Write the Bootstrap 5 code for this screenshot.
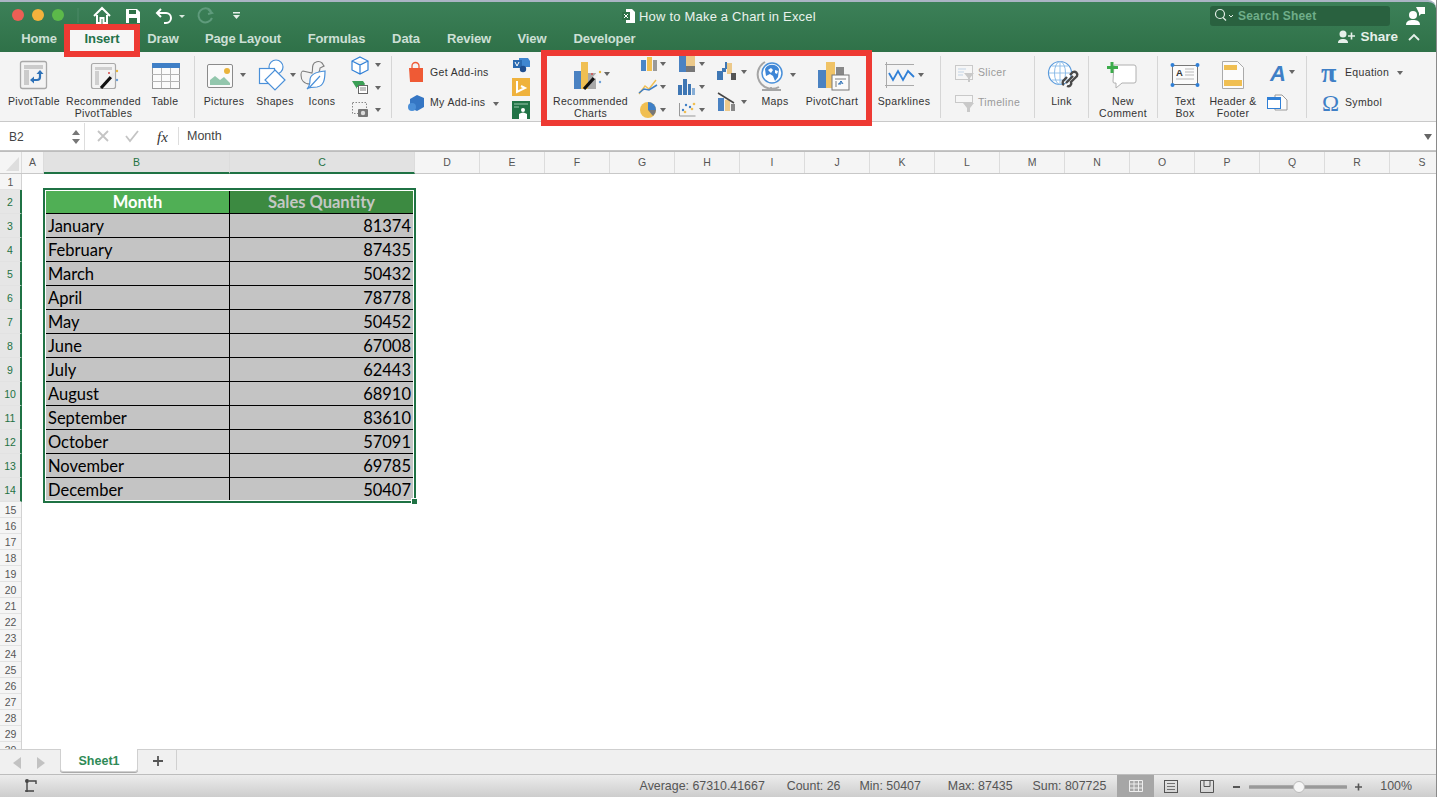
<!DOCTYPE html>
<html lang="en">
<head>
<meta charset="utf-8">
<title>How to Make a Chart in Excel</title>
<link rel="stylesheet" href="https://cdn.jsdelivr.net/npm/bootstrap@5.3.0/dist/css/bootstrap.min.css">
<style>
html,body{margin:0;height:797px;overflow:hidden;background:#fff}
body{font-family:"Liberation Sans",Arial,sans-serif;color:#333}
svg{display:block;flex:none}
.xl-win{height:797px;position:relative;overflow:hidden;border-right:1px solid #8a8a8a}
.xl-head{height:52px;background:linear-gradient(#3c8058,#2f7148);color:#fff;border-top:2px solid #aab4c4;border-top-right-radius:8px}
.xl-toprow{height:28px;padding-left:0}
.xl-title{width:177px;font-size:13px;color:#e9f2ec;letter-spacing:.2px;white-space:nowrap;padding:1px 0 0 1px}
.xl-search{width:180px;height:20px;background:#29613f;border-radius:3px;font-size:12px;color:#6fae8a;font-weight:700;letter-spacing:.2px}
.xl-tabs .nav-link{color:#dbe9e0;font-size:13px;font-weight:700;padding:0;height:22px;line-height:17px;text-align:center;letter-spacing:-.1px;opacity:.92}
.xl-tabs .nav-link.active{color:#23724a;background:#f6f6f6;opacity:1}
.tw62{width:62px;margin-left:8px}.tw64{width:64px}.tw58{width:58px}.tw102{width:102px}.tw85{width:85px}.tw54{width:54px}.tw72{width:72px}.tw91{width:91px}
.xl-share{font-size:13.5px;line-height:14px;font-weight:700;color:#e6f0ea;padding-bottom:8px}
.xl-mchev{margin-left:6px;margin-right:16px}
.xl-ribbon{height:70px;background:#f4f4f4;border-bottom:1px solid #c9c9c9;padding:2px 0 0 5px}
.xl-item{display:flex;flex-direction:column;align-items:center;flex:none}
.xl-w42{width:42px}
.xl-lab{font-size:10.5px;line-height:12px;color:#333;text-align:center;white-space:nowrap;letter-spacing:.35px}
.xl-sep{width:1px;height:62px;background:#d6d6d6;margin-top:2px;flex:none}
.xl-gap6{width:6px;flex:none}
.xl-g113{width:113px;flex:none}.xl-g93{width:93px;flex:none}.xl-g130{width:130px;flex:none}
.xl-row{height:30px;display:flex;align-items:center;font-size:10.5px;color:#333;white-space:nowrap;letter-spacing:.35px}
.xl-off{color:#9a9a9a}
.xl-fbar{height:28px;background:#fff;font-size:12.5px;color:#444;padding-top:1px}
.xl-month{margin-left:7px}
.xl-name{width:85px;padding-left:9px;border-right:1px solid #ddd;height:27px;font-size:12px}
.xl-fgap{background:#f2f2f2;border-top:1px solid #c6c6c6;border-bottom:1px solid #bdbdbd;box-sizing:content-box;height:0}
.xl-cols{height:22px;background:#f5f5f5;border-bottom:1px solid #c8c8c8;font-size:10.5px;color:#555}
.xl-cols>div{flex:none;text-align:center;line-height:21px;border-right:1px solid #dcdcdc;height:21px}
.cw22{width:22px}.cw186{width:186px}.cw185{width:185px}.cw65{width:65px}
.xl-cols>.xl-hot{background:#e2e2e2;color:#1f7244;height:22px;border-bottom:2px solid #1f7244;line-height:20px}
.xl-sheet{height:575px;overflow:hidden}
.xl-rows{width:22px;flex:none;background:#f5f5f5;border-right:1px solid #d2d2d2;font-size:10.5px;color:#555;text-align:center}
.xl-rows>div{height:16px;line-height:16px;border-bottom:1px solid #e2e2e2}
.xl-rows>.xl-rh{height:24px;line-height:24px;color:#1f7244;background:#e6e6e6;border-right:2px solid #1f7244;margin-right:-1px}
.xl-cells{position:relative;flex:1;background:#fff}
.xl-sel{position:relative;margin:14px 0 0 21px;width:373px;height:315px;border:2px solid #1f7244;padding:1px;background:#fff}
.xl-grip{position:absolute;right:-4px;bottom:-4px;width:7px;height:7px;background:#1f7244;border:1px solid #fff}
.xl-data{border-collapse:separate;border-spacing:0;width:367px;table-layout:fixed;font-family:Lato,"Open Sans",sans-serif;font-size:16.5px;color:#000}
.xl-data td,.xl-data th{height:24px;padding:0 2px;line-height:22px;background:#c4c4c4;border-bottom:1px solid #000;white-space:nowrap}
.xl-data td:first-child,.xl-data th:first-child{width:184px;border-right:1px solid #000}
.xl-data td:last-child{text-align:right}
.xl-data tr:last-child td{border-bottom:0;height:22px;line-height:20px;padding-top:2px}
.xl-data th{height:23px;text-align:center;font-weight:700;color:#fff;background:#50af55}
.xl-data th:last-child{background:#3c8a41;color:#c4c8c4}
.xl-tabsbar{height:25px;background:#f0f0f0;border-top:1px solid #cfcfcf}
.xl-sheet1{width:78px;height:23px;background:#fff;color:#2f8a57;font-size:12.5px;font-weight:700;text-align:center;line-height:24px;border:1px solid #d0d0d0;border-top:0;border-radius:0 0 3px 3px;box-shadow:0 1px 0 #aaa;margin-top:-1px}
.xl-status{height:23px;background:linear-gradient(#ececec,#cdcdcd);border-top:1px solid #bdbdbd;font-size:12.4px;color:#555;white-space:nowrap}
.xl-stat-l{margin-left:auto}
.xl-m22{margin-left:22px}.xl-m19{margin-left:19px}.xl-m27{margin-left:27px}.xl-m20{margin-left:20px}
.xl-normal{width:37px;height:23px;background:#a6a6a6;margin-left:11px}
.xl-red{position:absolute;border:6px solid #ee3a33;pointer-events:none}
.xl-red1{left:64px;top:24px;width:76px;height:33px}
.xl-red2{left:541px;top:50px;width:331px;height:76px}
</style>
</head>
<body>
<div class="xl-win d-flex flex-column">
  <header class="xl-head">
    <div class="xl-toprow d-flex align-items-center">
      <svg width="622" height="28" viewBox="0 2 622 28">
        <circle cx="18" cy="15" r="6" fill="#ec5f55"/><circle cx="38" cy="15" r="6" fill="#f4b23c"/><circle cx="58" cy="15" r="6" fill="#5cb94a"/>
        <path d="M78 8v15" stroke="#4d8a68"/>
        <path d="M94 16l8-8 8 8M97 15v8h3.500v-5h3v5h3.500v-8" fill="none" stroke="#fff" stroke-width="2"/>
        <path d="M126 9h11l3 3v11h-14z" fill="#fff"/><path d="M129 10h7v4h-7zM129 18h8v5h-8z" fill="#2f7148"/>
        <path d="M161 9l-4 4 4 4M158 13h8a5 5 0 0 1 0 10h-2" fill="none" stroke="#fff" stroke-width="2"/>
        <path d="M179 15h6l-3 3z" fill="#dbe9e0"/>
        <path d="M208 9l4 4-4 1M211 11a7 7 0 1 0 1 7" fill="none" stroke="#5f9b7c" stroke-width="2"/>
        <path d="M233 12h7v1.500h-7zM233 15h7l-3.500 4z" fill="#e6f0ea"/>
      </svg>
      <svg width="16" height="28" viewBox="622 2 16 28">
        <path d="M626 9h6l3 3v11h-9z" fill="#fff"/><path d="M622 12h8v8h-8z" fill="#2f7148"/><path d="M624 14l4 4M628 14l-4 4" stroke="#fff"/>
      </svg>
      <div class="xl-title">How to Make a Chart in Excel</div>
      <svg width="395" height="28" viewBox="815 2 395 28"></svg>
      <div class="xl-search d-flex align-items-center">
        <svg width="28" height="20" viewBox="1210 6 28 20"><circle cx="1220" cy="14" r="4.500" fill="none" stroke="#e4efe8" stroke-width="1.200"/><path d="M1223 17.500l3 3" stroke="#e4efe8" stroke-width="1.200"/><path d="M1229 15l2 2 2-2" fill="none" stroke="#e4efe8"/></svg>
        <span>Search Sheet</span>
      </div>
      <svg class="ms-3" width="20" height="28" viewBox="1405 2 20 28">
        <path d="M1415 7h9v7h-4l-2 2v-3z" fill="#fff"/><circle cx="1412" cy="15" r="4" fill="#fff"/><path d="M1405 25c0-4 3-5 7-5s7 1 7 5z" fill="#fff"/>
      </svg>
    </div>
    <div class="d-flex align-items-end">
      <ul class="nav xl-tabs">
        <li class="nav-item"><a class="nav-link tw62" href="#">Home</a></li>
        <li class="nav-item"><a class="nav-link active tw64" href="#">Insert</a></li>
        <li class="nav-item"><a class="nav-link tw58" href="#">Draw</a></li>
        <li class="nav-item"><a class="nav-link tw102" href="#">Page Layout</a></li>
        <li class="nav-item"><a class="nav-link tw85" href="#">Formulas</a></li>
        <li class="nav-item"><a class="nav-link tw54" href="#">Data</a></li>
        <li class="nav-item"><a class="nav-link tw72" href="#">Review</a></li>
        <li class="nav-item"><a class="nav-link tw54" href="#">View</a></li>
        <li class="nav-item"><a class="nav-link tw91" href="#">Developer</a></li>
      </ul>
      <div class="xl-share ms-auto d-flex align-items-center gap-1">
        <svg width="18" height="14" viewBox="1341 31 18 14"><circle cx="1346" cy="35" r="3.500" fill="#e6f0ea"/><path d="M1341 44c0-3 2-4 5-4s5 1 5 4z" fill="#e6f0ea"/><path d="M1351 37h7M1354.500 33.500v7" stroke="#e6f0ea" stroke-width="1.600"/></svg>
        <span>Share</span>
        <svg class="xl-mchev" width="12" height="14" viewBox="1408 31 12 14"><path d="M1409 41l5-5 5 5" fill="none" stroke="#e6f0ea" stroke-width="1.800"/></svg>
      </div>
    </div>
  </header>

  <section class="xl-ribbon d-flex">
    <div class="xl-item"><svg width="58" height="41" viewBox="5 54 58 41">
      <rect x="20.500" y="61.500" width="26" height="27" rx="2" fill="#f3f3f3" stroke="#a9a9a9" stroke-width="1.300"/><path d="M24 65h19v4H24zM24 70h5v15h-5z" fill="#cbcbcb"/>
      <path d="M40 73v4a3 3 0 0 1-3 3h-4" fill="none" stroke="#2f72b8" stroke-width="2.200"/><path d="M36.500 74l3.500-4 3.500 4zM34 76.500L30 80l4 3.500z" fill="#2f72b8"/></svg><div class="xl-lab">PivotTable</div></div>
    <div class="xl-item"><svg width="81" height="41" viewBox="63 54 81 41">
      <rect x="91.500" y="63.500" width="24" height="25" rx="2" fill="#f3f3f3" stroke="#a9a9a9" stroke-width="1.200"/><path d="M95 67h17v3H95zM95 71h4v14h-4z" fill="#cfcfcf"/>
      <path d="M101 88l10-11" stroke="#111" stroke-width="3.200"/><path d="M111 77l3-3.500" stroke="#e8e8e8" stroke-width="3"/><circle cx="109" cy="73" r="1" fill="#d64b4b"/><circle cx="117" cy="71" r="1.200" fill="#e8b73e"/><circle cx="117" cy="80" r="1.200" fill="#6d9fd6"/></svg><div class="xl-lab">Recommended<br>PivotTables</div></div>
    <div class="xl-item"><svg width="42" height="41" viewBox="144 54 42 41">
      <rect x="152.500" y="63.500" width="27" height="25" fill="#fbfbfb" stroke="#9b9b9b"/><rect x="152" y="63" width="28" height="5" fill="#3f7fc6"/><path d="M152 74.500h28M152 81.500h28M161.500 68v20M170.500 68v20" stroke="#b5b5b5"/></svg><div class="xl-lab">Table</div></div>
    <div class="xl-sep ms-2"></div>
    <div class="xl-item"><svg width="58" height="41" viewBox="195 54 58 41">
      <rect x="207.500" y="64.500" width="25" height="23" rx="1.500" fill="#fafafa" stroke="#8b8b8b"/><circle cx="227" cy="71" r="3" fill="#eab43c"/><path d="M210 85v-5l5-4 5 4 4-3 6 6v2z" fill="#93c7ad"/><path d="M240 73h6l-3 4z" fill="#666"/></svg><div class="xl-lab">Pictures</div></div>
    <div class="xl-item"><svg width="44" height="41" viewBox="253 54 44 41">
      <g fill="#fff" stroke="#4a90d9" stroke-width="1.200"><circle cx="276" cy="67" r="7"/><rect x="259.500" y="68.500" width="15" height="15"/><path d="M275 70l10 10-10 10-10-10z"/></g><path d="M290 73h6l-3 4z" fill="#666"/></svg><div class="xl-lab">Shapes</div></div>
    <div class="xl-item"><svg width="50" height="41" viewBox="297 54 50 41">
      <path d="M310 84c-6 0-9-4-9-9 0-2 1-4 2-4l9 2c1-3 0-5 1-8 1-3 6-5 9-2 1 1 1 2 2 3l-4 2c0 3-1 4-2 6" fill="#f3f3f3" stroke="#7e7e7e" stroke-width="1.100"/>
      <path d="M307 89c2-2 3-4 3-9 0-5 5-8 15-9 0 8-1 15-8 16-3 0-7 0-10 2zM309 88l11-12" fill="#fff" stroke="#4a90d9" stroke-width="1.200"/></svg><div class="xl-lab">Icons</div></div>
    <svg width="44" height="66" viewBox="347 54 44 66">
      <path d="M360 57l8 4v9l-8 4-8-4v-9zM352 61l8 4 8-4M360 65v9" fill="#fff" stroke="#2f7fd6" stroke-width="1.200"/><path d="M375 63h6l-3 4z" fill="#666"/>
      <path d="M352 81h11l2 3-2 3h-6v2z" fill="#3b9f56"/><rect x="358.500" y="85.500" width="9" height="8" fill="#fff" stroke="#666"/><path d="M360 88h6M360 90h6" stroke="#666" stroke-width=".8"/><path d="M375 86h6l-3 4z" fill="#666"/>
      <rect x="352.500" y="102.500" width="14" height="11" fill="none" stroke="#888" stroke-dasharray="1.500 1.500"/><rect x="358" y="109" width="10" height="8" rx="1" fill="#777"/><circle cx="363" cy="113" r="2.200" fill="#ddd"/><path d="M375 108h6l-3 4z" fill="#666"/>
    </svg>
    <div class="xl-sep"></div>
    <div class="d-flex flex-column mt-1 xl-g113">
      <div class="xl-row"><svg width="38" height="30" viewBox="392 57 38 30"><path d="M409 67h14v14h-13z" fill="#ef5a35"/><path d="M412 68v-3a3.500 3.500 0 0 1 7 0v3" fill="none" stroke="#ef5a35" stroke-width="1.300"/></svg><span>Get Add-ins</span></div>
      <div class="xl-row"><svg width="38" height="30" viewBox="392 87 38 30"><path d="M417 94l7 3v9l-7 4-7-3v-9z" fill="#3576c4"/><circle cx="412" cy="106" r="4" fill="#4b8fd8"/></svg><span>My Add-ins</span><svg class="ms-2" width="6" height="30" viewBox="493 87 6 30"><path d="M493 101h6l-3 4z" fill="#666"/></svg></div>
    </div>
    <svg width="38" height="66" viewBox="505 54 38 66">
      <path d="M519 58h9l2 3v6h-11z" fill="#3f86d0"/><path d="M513 60h9v8h-9z" fill="#2a6ab0"/><path d="M515 62l2 4 2-4" fill="none" stroke="#fff"/><circle cx="523" cy="69" r="3.200" fill="#1f4e8f"/>
      <rect x="512" y="78" width="18" height="18" fill="#efb23d"/><path d="M517 81v11l8-4-4-2" fill="none" stroke="#fff" stroke-width="2"/>
      <rect x="512" y="101" width="18" height="18" fill="#217346"/><circle cx="523" cy="110" r="2" fill="#fff"/><path d="M519 119v-5q4-3 8 0v5z" fill="#fff"/><path d="M514 104h14M514 107h5" stroke="#9cc9ae"/>
    </svg>
    <div class="xl-item"><svg width="95" height="41" viewBox="543 54 95 41">
      <path d="M574 71h7v18h-7z" fill="#4a82c2"/><path d="M581 62h7v27h-7z" fill="#f0bf52"/><path d="M588 73h8v16h-8z" fill="#a8a8a8"/><path d="M584 89l10-11" stroke="#111" stroke-width="3.200"/><path d="M594 78l3-3.500" stroke="#eee" stroke-width="3"/><circle cx="600" cy="72" r="1.200" fill="#e8b73e"/><circle cx="600" cy="82" r="1.200" fill="#6d9fd6"/><circle cx="592" cy="74" r="1" fill="#d64b4b"/><path d="M604 72h6l-3 4z" fill="#666"/></svg><div class="xl-lab">Recommended<br>Charts</div></div>
    <svg width="36" height="66" viewBox="638 54 36 66">
      <path d="M641 60h5v11h-5z" fill="#4a86c8"/><path d="M647 57h5v14h-5z" fill="#f0bf52"/><path d="M653 60h4v11h-4z" fill="#9a9a9a"/><path d="M660 62h6l-3 4z" fill="#666"/>
      <path d="M639 94l6-8 4 3 7-9" fill="none" stroke="#f0bf52" stroke-width="1.400"/><path d="M639 93l5-4 5 1 8-5" fill="none" stroke="#3f7fc6" stroke-width="1.600"/><path d="M660 85h6l-3 4z" fill="#666"/>
      <circle cx="648" cy="110" r="8" fill="#f0bf52"/><path d="M648 110v-8a8 8 0 0 1 8 8z" fill="#3f7fc6"/><path d="M648 110h8a8 8 0 0 1-3 6z" fill="#777"/><path d="M660 108h6l-3 4z" fill="#666"/>
    </svg>
    <svg width="38" height="66" viewBox="674 54 38 66">
      <path d="M679 54h7v18h-7z" fill="#4a82c2"/><path d="M686 54h9v12h-9z" fill="#ecc98a"/><path d="M686 66h9v6h-9z" fill="#777"/><path d="M699 62h6l-3 4z" fill="#666"/>
      <path d="M678 85h4v10h-4z" fill="#3f77b4"/><path d="M683 79h4v16h-4z" fill="#3f77b4"/><path d="M688 84h3v11h-3z" fill="#3f77b4"/><path d="M692 88h3v7h-3z" fill="#87aed6"/><path d="M699 85h6l-3 4z" fill="#666"/>
      <path d="M679.500 103v13h16" fill="none" stroke="#999"/><g fill="#3f7fc6"><circle cx="683" cy="110" r="1.200"/><circle cx="690" cy="107" r="1.200"/><circle cx="686" cy="105" r="1.200"/></g><g fill="#f0bf52"><circle cx="685" cy="112" r="1.300"/><circle cx="692" cy="109" r="1.300"/><circle cx="694" cy="104" r="1.300"/></g><path d="M699 108h6l-3 4z" fill="#666"/>
    </svg>
    <svg width="40" height="66" viewBox="712 54 40 66">
      <path d="M717 71h6v9h-6z" fill="#3f77b4"/><path d="M722 68h4v4h-4zM725 62h2v7h-2z" fill="#3f77b4"/><path d="M727 63h5v11h-5z" fill="#ecc98a"/><path d="M731 73h5v7h-5z" fill="#555"/><path d="M741 70h6l-3 4z" fill="#666"/>
      <path d="M718 98h6v13h-6z" fill="#4a82c2"/><path d="M725 100h5v11h-5z" fill="#ecc98a"/><path d="M731 104h4v7h-4z" fill="#888"/><path d="M718 93l16 10" stroke="#444" stroke-width="1.500"/><path d="M741 100h6l-3 4z" fill="#666"/>
    </svg>
    <div class="xl-item"><svg width="46" height="41" viewBox="752 54 46 41">
      <path d="M765 62a13.500 13.500 0 0 0 14 25" fill="none" stroke="#a5a5a5" stroke-width="2"/><path d="M771 87v3M762 90h19" stroke="#a5a5a5" stroke-width="1.800"/><circle cx="772" cy="73" r="10" fill="#fff" stroke="#4a90d9" stroke-width="1.500"/><path d="M765 69a8 8 0 0 1 14 0l-1 8-3 4-2-5-3-2-4 2z" fill="#3f86d6"/><path d="M768 70l3-2 2 2-2 3zM775 70l3 1-1 3-2-1z" fill="#fff"/><path d="M790 73h6l-3 4z" fill="#666"/></svg><div class="xl-lab">Maps</div></div>
    <div class="xl-item"><svg width="68" height="41" viewBox="798 54 68 41">
      <path d="M818 70h8v18h-8z" fill="#4a82c2"/><path d="M826 62h9v26h-9z" fill="#f0c366"/><path d="M836 67h8v9h-8z" fill="#888"/><rect x="832" y="75" width="17" height="15" fill="#fafafa" stroke="#777"/><path d="M835 78h11v2h-11zM835 81h2v6h-2z" fill="#bbb"/><path d="M841 81v3h-3M843 84l-2-3-2 3" fill="none" stroke="#2f72b8"/></svg><div class="xl-lab">PivotChart</div></div>
    <div class="xl-gap6"></div>
    <div class="xl-item"><svg width="64" height="41" viewBox="872 54 64 41">
      <path d="M885 64.500h29M885 85.500h29M886.500 62v26" stroke="#aaa"/><path d="M889 73l4 7 5-9 5 9 5-9 6 6" fill="none" stroke="#2f7fd6" stroke-width="1.800"/><path d="M918 73h6l-3 4z" fill="#666"/></svg><div class="xl-lab">Sparklines</div></div>
    <div class="xl-sep ms-1"></div>
    <div class="d-flex flex-column mt-1 xl-g93">
      <div class="xl-row xl-off"><svg width="37" height="30" viewBox="941 57 37 30"><rect x="955.500" y="64.500" width="17" height="14" fill="#f6f6f6" stroke="#c9c9c9"/><path d="M958 68h8M958 71h6M958 74h5" stroke="#c3d4e6"/><path d="M964 72h10l-4 5v4h-2v-4z" fill="#c9c9c9"/></svg><span>Slicer</span></div>
      <div class="xl-row xl-off"><svg width="37" height="30" viewBox="941 87 37 30"><rect x="955.500" y="94.500" width="17" height="7" fill="#f6f6f6" stroke="#c9c9c9"/><path d="M963 102h11l-4 5v4h-3v-4z" fill="#c9c9c9"/></svg><span>Timeline</span></div>
    </div>
    <div class="xl-sep"></div>
    <div class="xl-item"><svg width="53" height="41" viewBox="1035 54 53 41">
      <circle cx="1060" cy="73" r="11.500" fill="#fff" stroke="#5b9bdc" stroke-width="1.200"/><path d="M1049 73h23M1060 61.500v23M1052 66h16M1052 80h16" stroke="#8bbbe8" stroke-width=".9"/><ellipse cx="1060" cy="73" rx="5.500" ry="11.500" fill="none" stroke="#8bbbe8"/>
      <path d="M1064 85a3 3 0 0 1 0-5l3-3M1070 75l3-3a3 3 0 0 1 4 4l-3 3-3 3a3 3 0 0 1-4 4M1066 83l7-7" fill="none" stroke="#4a4a4a" stroke-width="2.400"/></svg><div class="xl-lab">Link</div></div>
    <div class="xl-sep"></div>
    <div class="xl-item"><svg width="68" height="41" viewBox="1089 54 68 41">
      <path d="M1114 65h20q2 0 2 2v14q0 2-2 2h-12l-6 5v-5h-2q-1 0-1-2z" fill="#fff" stroke="#b0b0b0"/><path d="M1112 62v11M1107 67.500h11" stroke="#3cab4b" stroke-width="3"/></svg><div class="xl-lab">New<br>Comment</div></div>
    <div class="xl-sep"></div>
    <div class="xl-item"><svg width="54" height="41" viewBox="1158 54 54 41">
      <rect x="1172.500" y="65.500" width="25" height="19" fill="#fbfbfb" stroke="#777"/><g fill="#2f7fd6"><circle cx="1172.500" cy="65" r="2"/><circle cx="1197.500" cy="65" r="2"/><circle cx="1172.500" cy="85" r="2"/><circle cx="1197.500" cy="85" r="2"/></g><text x="1176" y="76" font-family="Liberation Sans" font-size="9.500" font-weight="700" fill="#333">A</text><path d="M1185 69h9M1185 72h9M1185 75h9M1176 79h18" stroke="#aaa" stroke-width=".8"/></svg><div class="xl-lab">Text<br>Box</div></div>
    <div class="xl-item xl-w42"><svg width="42" height="41" viewBox="1212 54 42 41">
      <path d="M1222.500 61.500h15l6 6v21h-21z" fill="#fbfbfb" stroke="#aaa"/><path d="M1224 65h13v5h-13zM1224 80h18v6h-18z" fill="#f0bf52"/></svg><div class="xl-lab">Header &amp;<br>Footer</div></div>
    <svg width="52" height="66" viewBox="1254 54 52 66">
      <text x="1270" y="81" font-family="Liberation Sans" font-size="22" font-weight="700" font-style="italic" fill="#3f7fc6">A</text><path d="M1289 70h6l-3 4z" fill="#666"/>
      <path d="M1275 95h7l5 5v10h-12z" fill="#fbfbfb" stroke="#999"/><rect x="1267.500" y="97.500" width="13" height="11" fill="#fff" stroke="#2f7fd6"/><rect x="1267" y="97" width="14" height="3" fill="#2f7fd6"/>
    </svg>
    <div class="xl-sep"></div>
    <div class="d-flex flex-column mt-1 xl-g130">
      <div class="xl-row"><svg width="38" height="30" viewBox="1307 57 38 30"><text x="1321" y="81" font-family="Liberation Serif" font-size="28" font-weight="700" fill="#3f7fc6">π</text></svg><span>Equation</span><svg class="ms-2" width="6" height="30" viewBox="1395 57 6 30"><path d="M1395 70h6l-3 4z" fill="#666"/></svg></div>
      <div class="xl-row"><svg width="38" height="30" viewBox="1307 87 38 30"><text x="1322" y="110" font-family="Liberation Serif" font-size="23" fill="#3f7fc6">Ω</text></svg><span>Symbol</span></div>
    </div>
  </section>

  <section class="xl-fbar d-flex align-items-center">
    <div class="xl-name d-flex align-items-center justify-content-between pe-1"><span>B2</span>
      <svg width="8" height="18" viewBox="0 0 8 18"><path d="M0 7l4-5 4 5zM0 11l4 5 4-5z" fill="#777"/></svg></div>
    <svg width="95" height="27" viewBox="86 123 95 27"><path d="M99 131l10 10M109 131l-10 10" stroke="#c4c4c4" stroke-width="1.800"/><path d="M127 136l4 5 8-10" fill="none" stroke="#c4c4c4" stroke-width="1.800"/><text x="158" y="142" font-family="Liberation Serif" font-size="15" font-style="italic" fill="#333">fx</text><path d="M179.500 127v18" stroke="#ddd"/></svg>
    <span class="xl-month flex-grow-1">Month</span>
    <svg class="me-1" width="8" height="6" viewBox="0 0 8 6"><path d="M0 0h8l-4 6z" fill="#666"/></svg>
  </section>
  <div class="xl-fgap"></div>
  <div class="xl-cols d-flex">
    <div class="cw22"><svg width="21" height="20" viewBox="0 0 21 20"><path d="M6 19L19 5v14z" fill="#dedede"/></svg></div>
    <div class="cw22">A</div><div class="cw186 xl-hot">B</div><div class="cw185 xl-hot">C</div>
    <div class="cw65">D</div><div class="cw65">E</div><div class="cw65">F</div><div class="cw65">G</div><div class="cw65">H</div><div class="cw65">I</div><div class="cw65">J</div><div class="cw65">K</div><div class="cw65">L</div><div class="cw65">M</div><div class="cw65">N</div><div class="cw65">O</div><div class="cw65">P</div><div class="cw65">Q</div><div class="cw65">R</div><div class="cw65">S</div>
  </div>
  <section class="xl-sheet d-flex">
    <div class="xl-rows">
      <div>1</div><div class="xl-rh">2</div><div class="xl-rh">3</div><div class="xl-rh">4</div><div class="xl-rh">5</div><div class="xl-rh">6</div><div class="xl-rh">7</div><div class="xl-rh">8</div><div class="xl-rh">9</div><div class="xl-rh">10</div><div class="xl-rh">11</div><div class="xl-rh">12</div><div class="xl-rh">13</div><div class="xl-rh">14</div>
      <div>15</div><div>16</div><div>17</div><div>18</div><div>19</div><div>20</div><div>21</div><div>22</div><div>23</div><div>24</div><div>25</div><div>26</div><div>27</div><div>28</div><div>29</div><div>30</div>
    </div>
    <div class="xl-cells">
      <div class="xl-sel">
        <table class="xl-data">
          <tr><th>Month</th><th>Sales Quantity</th></tr>
          <tr><td>January</td><td>81374</td></tr>
          <tr><td>February</td><td>87435</td></tr>
          <tr><td>March</td><td>50432</td></tr>
          <tr><td>April</td><td>78778</td></tr>
          <tr><td>May</td><td>50452</td></tr>
          <tr><td>June</td><td>67008</td></tr>
          <tr><td>July</td><td>62443</td></tr>
          <tr><td>August</td><td>68910</td></tr>
          <tr><td>September</td><td>83610</td></tr>
          <tr><td>October</td><td>57091</td></tr>
          <tr><td>November</td><td>69785</td></tr>
          <tr><td>December</td><td>50407</td></tr>
        </table>
        <div class="xl-grip"></div>
      </div>
    </div>
  </section>
  <section class="xl-tabsbar d-flex align-items-start">
    <svg width="60" height="24" viewBox="0 750 60 24"><path d="M21 757v12l-8-6z" fill="#c2c2c2"/><path d="M37 757v12l8-6z" fill="#c2c2c2"/></svg>
    <div class="xl-sheet1">Sheet1</div>
    <svg width="60" height="24" viewBox="138 750 60 24"><path d="M153 761h10M158 756v10" stroke="#555" stroke-width="1.800"/><path d="M176.500 750v20" stroke="#d0d0d0"/></svg>
  </section>
  <footer class="xl-status d-flex align-items-center">
    <svg class="ms-4" width="14" height="16" viewBox="22 778 14 16"><circle cx="25" cy="781" r="2" fill="#444"/><path d="M25 782v10M27 781h7v3M23 791h9" fill="none" stroke="#444" stroke-width="1.400"/></svg>
    <div class="xl-stat-l d-flex align-items-center">
      <span>Average: 67310.41667</span><span class="xl-m22">Count: 26</span><span class="xl-m19">Min: 50407</span><span class="xl-m27">Max: 87435</span><span class="xl-m20">Sum: 807725</span>
    </div>
    <div class="xl-normal d-flex align-items-center justify-content-center"><svg width="14" height="12" viewBox="0 0 14 12"><path d="M.5.500h13v11H.500zM5 .5v11M9.500.5v11M.5 4h13M.5 8h13" fill="none" stroke="#eee"/></svg></div>
    <svg width="95" height="23" viewBox="1155 774 95 23"><rect x="1165.500" y="779.500" width="13" height="12" fill="none" stroke="#555"/><path d="M1168 782.500h8M1168 785.500h8M1168 788.500h8" stroke="#555" stroke-width=".8"/>
      <path d="M1201.500 791.500v-12h13v12zM1205 779.500v6h6v-6" fill="none" stroke="#555"/><path d="M1234 786h7" stroke="#555" stroke-width="2"/></svg>
    <svg width="98" height="23" viewBox="1250 774 98 23"><path d="M1251 786h96" stroke="#999" stroke-width="3.500" stroke-linecap="round"/><circle cx="1300" cy="786" r="5.500" fill="#f6f6f6" stroke="#bbb"/></svg>
    <svg width="33" height="23" viewBox="1348 774 33 23"><path d="M1356 786h7M1359.500 782.500v7" stroke="#555" stroke-width="1.600"/></svg>
    <span class="me-4">100%</span>
  </footer>
  <div class="xl-red xl-red1"></div>
  <div class="xl-red xl-red2"></div>
</div>
<script src="https://cdn.jsdelivr.net/npm/bootstrap@5.3.0/dist/js/bootstrap.bundle.min.js"></script>
</body>
</html>
